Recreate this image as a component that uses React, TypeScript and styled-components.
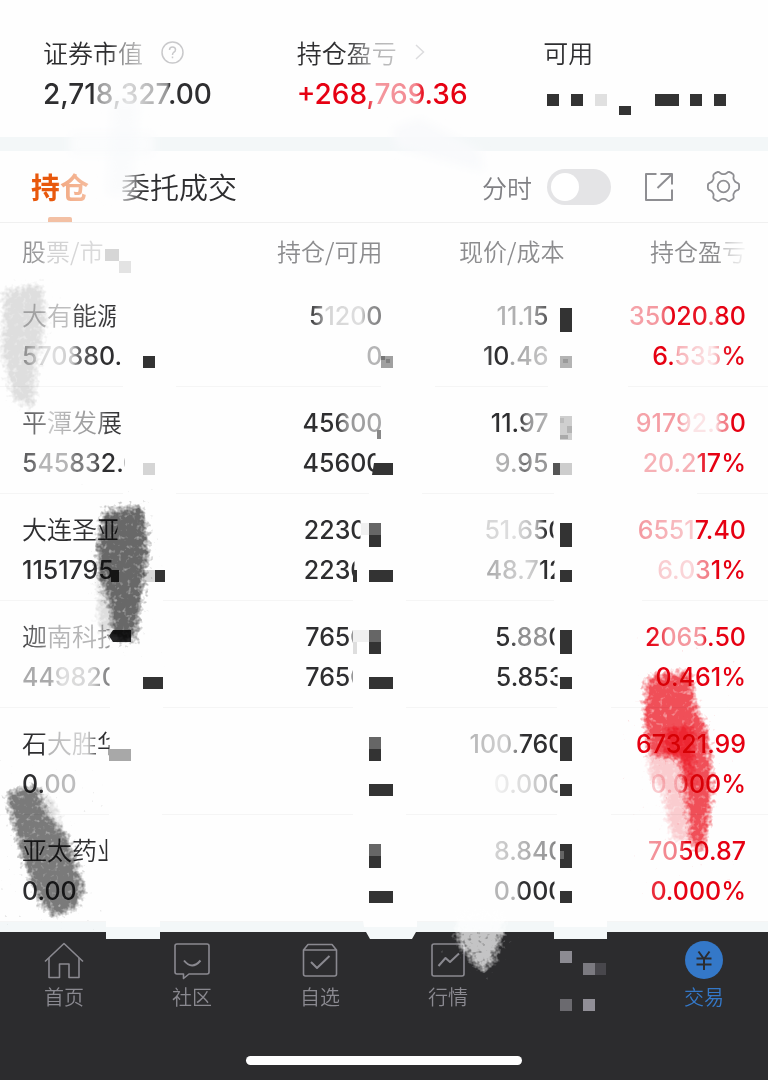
import React from "react";
import styled, { createGlobalStyle } from "styled-components";

type Stop = [number, number];

const cjk = `"Noto Sans CJK SC", sans-serif`;

const GlobalStyle = createGlobalStyle`
  * { box-sizing: border-box; }
  body {
    margin: 0;
    background: #fefefe;
    color: #2e2e30;
    font-family: Inter, ${cjk};
  }
  button { border: 0; padding: 0; background: none; font: inherit; color: inherit; cursor: pointer; }
`;

const Page = styled.div`
  position: relative;
  display: flex;
  flex-direction: column;
  min-height: 100vh;
  overflow: hidden;
`;

/* Text whose ink thins out along its width; stops are [offset px, opacity]. */
const Fade = styled.span<{ $stops?: Stop[] }>`
  display: inline-block;
  white-space: nowrap;
  ${({ $stops }) =>
    $stops &&
    `mask-image: linear-gradient(90deg, ${$stops
      .map(([x, a]) => `rgba(0,0,0,${a}) ${x}px`)
      .join(", ")});`}
`;

const Summary = styled.section`
  display: grid;
  grid-template-columns: 35% 34% 1fr;
  padding: 31px 0 22px 43px;
`;

const Stat = styled.div`
  display: flex;
  flex-direction: column;
`;

const StatLabel = styled.div`
  display: flex;
  align-items: center;
  gap: 18px;
  height: 42px;
  font: 350 25px/40px ${cjk};
`;

const StatValue = styled.div<{ $up?: boolean }>`
  height: 42px;
  font-size: 28px;
  font-weight: 500;
  line-height: 42px;
  color: ${({ $up }) => ($up ? "#e60012" : "#2e2e30")};
`;

const Band = styled.div<{ $h: number }>`
  height: ${({ $h }) => $h}px;
  background: #f3f7f8;
`;

const Toolbar = styled.div`
  display: flex;
  align-items: center;
  height: 72px;
  padding: 0 28px 0 31px;
  border-bottom: 1px solid #f0f0f0;
`;

const Tab = styled.button<{ $active?: boolean }>`
  position: relative;
  height: 71px;
  margin-right: 32px;
  font: ${({ $active }) => ($active ? 700 : 350)} 29px/71px ${cjk};
  color: ${({ $active }) => ($active ? "#e8580c" : "#2e2e30")};
  &::after {
    content: "";
    display: ${({ $active }) => ($active ? "block" : "none")};
    position: absolute;
    left: 17px;
    bottom: 0;
    width: 24px;
    height: 5px;
    border-radius: 2px 2px 0 0;
    background: #f3c0a4;
  }
`;

const SwitchLabel = styled.label`
  display: flex;
  align-items: center;
  gap: 15px;
  margin-left: auto;
  font: 350 25px/36px ${cjk};
  color: #808084;
`;

const Switch = styled.input`
  appearance: none;
  width: 64px;
  height: 36px;
  margin: 0;
  padding: 4px;
  border-radius: 18px;
  background: #e4e4e6;
  &::before {
    content: "";
    display: block;
    width: 28px;
    height: 28px;
    border-radius: 50%;
    background: #fff;
  }
`;

const IconButton = styled.button`
  display: flex;
  margin-left: 34px;
  color: #8e8e92;
`;

const Table = styled.table`
  width: 100%;
  table-layout: fixed;
  border-collapse: separate;
  border-spacing: 0;
`;

const Head = styled.th<{ $left?: boolean }>`
  height: 57px;
  padding: 0;
  font: 350 24px/55px ${cjk};
  vertical-align: top;
  color: #8c8c8e;
  text-align: ${({ $left }) => ($left ? "left" : "right")};
  &:first-child { padding-left: 22px; }
  &:last-child { padding-right: 22px; }
`;

const Cell = styled.td`
  height: 107px;
  padding: 16px 0 10px;
  border-bottom: 1px solid #f5f5f5;
  text-align: right;
  vertical-align: top;
  &:first-child { padding-left: 22px; text-align: left; }
  &:last-child { padding-right: 22px; color: #e60012; }
`;

const Line = styled.div<{ $name?: boolean; $inset?: boolean }>`
  height: 40px;
  padding-right: ${({ $inset }) => ($inset ? 16 : 0)}px;
  font: ${({ $name }) => ($name ? `350 25px/37px ${cjk}` : `500 25px/40px Inter, sans-serif`)};
`;

const Nav = styled.nav`
  flex: 1;
  display: flex;
  flex-direction: column;
  justify-content: space-between;
  align-items: center;
  gap: 40px;
  padding: 9px 0 15px;
  background: #2c2c2e;
`;

const NavList = styled.div`
  display: grid;
  grid-template-columns: repeat(6, 1fr);
  width: 100%;
`;

const NavItem = styled.a<{ $active?: boolean }>`
  display: flex;
  flex-direction: column;
  align-items: center;
  font: 350 20px/32px ${cjk};
  color: ${({ $active }) => ($active ? "#3478c8" : "#8a8990")};
  text-decoration: none;
`;

const HomeBar = styled.div`
  width: 36%;
  height: 9px;
  border-radius: 5px;
  background: #fff;
`;

const Layer = styled.svg<{ $multiply?: boolean }>`
  position: absolute;
  top: 0;
  left: 0;
  pointer-events: none;
  mix-blend-mode: ${({ $multiply }) => ($multiply ? "multiply" : "normal")};
`;

interface Entry {
  t: string;
  f?: Stop[];
  inset?: boolean;
}

const rows: Entry[][][] = [
  [
    [
      { t: "大有能源", f: [[0, 0.35], [48, 0.3], [50, 0.85], [75, 0.9], [93, 1], [94, 0]] },
      { t: "570880.", f: [[0, 0.5], [14, 0.2], [30, 0.15], [50, 0.25], [56, 0.7], [80, 1]] },
    ],
    [
      { t: "51200", f: [[0, 1], [12, 0.6], [16, 0.2], [52, 0.15], [58, 0.5], [73, 0.6]] },
      { t: "0", f: [[0, 0.35], [16, 0.35]] },
    ],
    [
      { t: "11.15", f: [[0, 0.35], [34, 0.4], [50, 0.8]], inset: true },
      { t: "10.46", f: [[0, 0.8], [12, 1], [24, 1], [28, 0.45], [65, 0.25]], inset: true },
    ],
    [
      { t: "35020.80", f: [[0, 0.35], [30, 0.4], [44, 1], [76, 0.9], [79, 0.6], [86, 0.6], [90, 1]] },
      { t: "6.535%", f: [[0, 1], [20, 1], [26, 0.3], [60, 0.08], [68, 0.4], [72, 0.9], [88, 1]] },
    ],
  ],
  [
    [
      { t: "平潭发展", f: [[0, 0.8], [24, 0.6], [27, 0.25], [50, 0.4], [75, 0.5], [85, 0.9], [98, 1]] },
      { t: "545832.0", f: [[0, 0.8], [12, 0.7], [16, 0.35], [45, 0.35], [55, 0.7], [66, 0.5], [80, 1], [102, 1], [103, 0]] },
    ],
    [
      { t: "45600", f: [[0, 1], [34, 1], [44, 0.5], [79, 0.4]] },
      { t: "45600", f: [[0, 1], [72, 1], [73, 0]] },
    ],
    [
      { t: "11.97", f: [[0, 1], [28, 1], [38, 0.5], [62, 0.3]], inset: true },
      { t: "9.95", f: [[0, 0.35], [20, 0.4], [30, 0.7], [36, 0.5], [55, 0.5]], inset: true },
    ],
    [
      { t: "91792.80", f: [[0, 0.35], [42, 0.4], [56, 0.1], [80, 0.1], [86, 0.5], [94, 0.5], [96, 1]] },
      { t: "20.217%", f: [[0, 0.3], [50, 0.3], [58, 0.8], [66, 1]] },
    ],
  ],
  [
    [
      { t: "大连圣亚", f: [[0, 1], [95, 1], [96, 0]] },
      { t: "1151795", f: [[0, 1], [90, 1], [91, 0]] },
    ],
    [
      { t: "2230", f: [[0, 1], [56, 1], [57, 0]], inset: true },
      { t: "2230", f: [[0, 1], [50, 1], [51, 0]], inset: true },
    ],
    [
      { t: "51.650", f: [[0, 0.2], [30, 0.15], [52, 0.35], [62, 1], [69, 1], [70, 0]] },
      { t: "48.712", f: [[0, 0.4], [40, 0.2], [52, 0.3], [56, 1], [68, 1], [69, 0]] },
    ],
    [
      { t: "65517.40", f: [[0, 0.4], [56, 0.2], [58, 1]] },
      { t: "6.031%", f: [[0, 0.2], [35, 0.15], [42, 0.45], [53, 0.5], [55, 1]] },
    ],
  ],
  [
    [
      { t: "迦南科技", f: [[0, 0.9], [24, 0.6], [28, 0.35], [75, 0.35], [87, 0.5], [88, 0]] },
      { t: "449820", f: [[0, 0.4], [28, 0.4], [40, 0.15], [70, 0.2], [80, 0.5], [87, 0.6], [88, 0]] },
    ],
    [
      { t: "7650", f: [[0, 1], [47, 1], [48, 0]], inset: true },
      { t: "7650", f: [[0, 1], [47, 1], [48, 0]], inset: true },
    ],
    [
      { t: "5.880", f: [[0, 1], [16, 1], [24, 0.55], [50, 0.5], [56, 1], [59, 1], [60, 0]] },
      { t: "5.853", f: [[0, 1], [61, 1], [62, 0]] },
    ],
    [
      { t: "2065.50", f: [[0, 1], [12, 0.9], [26, 0.4], [56, 0.4], [62, 1]] },
      { t: "0.461%" },
    ],
  ],
  [
    [
      { t: "石大胜华", f: [[0, 1], [22, 1], [26, 0.35], [65, 0.2], [74, 0.8], [76, 1], [87, 1], [88, 0]] },
      { t: "0.00", f: [[0, 1], [20, 1], [25, 0.35], [54, 0.3]] },
    ],
    [],
    [
      { t: "100.760", f: [[0, 0.35], [36, 0.2], [46, 0.6], [53, 1], [87, 1], [88, 0]] },
      { t: "0.000", f: [[0, 0.05], [36, 0.2], [60, 0.4], [63, 0.6], [64, 0]] },
    ],
    [{ t: "67321.99" }, { t: "0.000%", f: [[0, 0.2], [28, 0.2], [40, 1]] }],
  ],
  [
    [{ t: "亚太药业", f: [[0, 1], [85, 1], [86, 0]] }, { t: "0.00" }],
    [],
    [
      { t: "8.840", f: [[0, 0.2], [30, 0.35], [55, 0.5], [61, 0.6], [62, 0]] },
      { t: "0.000", f: [[0, 0.35], [22, 0.35], [27, 1], [60, 1], [61, 0]] },
    ],
    [
      { t: "7050.87", f: [[0, 0.4], [30, 0.5], [38, 1]] },
      { t: "0.000%", f: [[0, 0.8], [16, 0.9], [20, 1]] },
    ],
  ],
];

const polar = (deg: number, r: number) => {
  const a = (deg * Math.PI) / 180;
  return `${(16.5 + r * Math.cos(a)).toFixed(2)} ${(16.5 + r * Math.sin(a)).toFixed(2)}`;
};

const gearPath =
  `M${polar(-9, 15.6)}` +
  [0, 60, 120, 180, 240, 300]
    .map(
      (d) =>
        `Q${polar(d, 15.8)} ${polar(d + 9, 15.6)}` +
        `C${polar(d + 19, 14.8)} ${polar(d + 14, 12.4)} ${polar(d + 30, 12.4)}` +
        `C${polar(d + 46, 12.4)} ${polar(d + 41, 14.8)} ${polar(d + 51, 15.6)}`
    )
    .join("") +
  "Z";

const navIcons: Record<string, React.ReactNode> = {
  首页: (
    <>
      <path d="M1 20.5L20 2.5L39 20.5" />
      <path d="M5 17V36.5H15.5V23H25V36.5H35V17" />
    </>
  ),
  社区: (
    <>
      <path d="M5 3H35Q37 3 37 5V31Q37 33 35 33H17L11.500 37.500V33H5Q3 33 3 31V5Q3 3 5 3Z" />
      <path d="M12 19.500Q20 29.500 28.500 19.500" strokeWidth="2" />
    </>
  ),
  自选: (
    <>
      <path d="M3.500 9L8 3.500H32L36.500 9V33Q36.500 35 34.500 35H5.500Q3.500 35 3.500 33ZM3.500 9H36.500" />
      <path d="M11 21L17 27L29.500 15" strokeWidth="2" />
    </>
  ),
  行情: (
    <>
      <rect x="4" y="3" width="32" height="32" rx="2" />
      <path d="M10.500 25L17.500 17L22 21L31 12.500" strokeWidth="2" />
    </>
  ),
  交易: (
    <>
      <circle cx="20" cy="19" r="19" fill="#3478c8" stroke="none" />
      <path d="M14.500 10.500L20 18L25.500 10.500M20 18V29M12.500 17.500H27.500M12.500 23.500H27.500" stroke="#2c2c2e" strokeWidth="2" />
    </>
  ),
};

/* Mosaic squares: x, y, width, height, fill */
const tiles: [number, number, number, number, string][] = [
  [105, 249, 14, 12, "#d6d6d6"],
  [119, 261, 12, 12, "#e3e3e3"],
  [143, 356, 12, 12, "#333"],
  [381, 356, 12, 12, "#a0a0a0"],
  [381, 356, 4, 4, "#777"],
  [386, 359, 4, 4, "#808080"],
  [143, 463, 12, 12, "#d5d5d5"],
  [377, 430, 4, 9, "#888"],
  [560, 308, 12, 24, "#333"],
  [560, 356, 12, 12, "#b4b4b4"],
  [563, 359, 5, 4, "#9a9a9a"],
  [560, 416, 12, 24, "#cfcfcf"],
  [560, 418, 4, 5, "#bcbcbc"],
  [567, 426, 5, 7, "#b4b4b4"],
  [560, 435, 8, 4, "#aaa"],
  [553, 463, 7, 12, "#555"],
  [560, 463, 12, 12, "#cdcdcd"],
  [111, 570, 8, 12, "#333"],
  [143, 570, 12, 12, "#d8d8d8"],
  [155, 570, 10, 12, "#333"],
  [361, 523, 8, 12, "#f0f0f0"],
  [353, 570, 4, 12, "#333"],
  [353, 630, 16, 12, "#f0f0f0"],
  [353, 642, 4, 12, "#dedede"],
  [143, 677, 20, 12, "#333"],
  [109, 749, 22, 12, "#a8a8a8"],
  ...[523, 630, 737, 844].flatMap((y): [number, number, number, number, string][] => [
    [369, y, 12, 12, "#666"],
    [369, y + 12, 12, 12, "#333"],
    [560, y, 12, 24, "#333"],
    [369, y + 47, 24, 12, "#333"],
    [560, y + 47, 12, 12, "#333"],
  ]),
  [560, 851, 4, 8, "#666"],
];

/* Breaks in the row dividers: x, y, width */
const gaps: [number, number, number][] = [
  [123, 386, 53], [381, 386, 54], [548, 386, 80],
  [123, 493, 53], [369, 493, 53], [554, 493, 143],
  [110, 600, 53], [353, 600, 53], [554, 600, 88],
  [110, 707, 53], [353, 707, 53], [557, 707, 54],
  [109, 814, 53], [353, 814, 53], [557, 814, 54],
];

const Grain = ({ id, color, seed }: { id: string; color: string; seed: number }) => (
  <filter id={id} x="-30%" y="-20%" width="160%" height="140%" colorInterpolationFilters="sRGB">
    <feGaussianBlur in="SourceAlpha" stdDeviation="5" result="soft" />
    <feTurbulence type="fractalNoise" baseFrequency="0.22" numOctaves={2} seed={seed} />
    <feColorMatrix values="0 0 0 0 0  0 0 0 0 0  0 0 0 0 0  1 0 0 0 0" result="noise" />
    <feComposite in="soft" in2="noise" operator="arithmetic" k2={1.6} k3={1.6} k4={-1.25} result="shape" />
    <feFlood floodColor={color} />
    <feComposite in2="shape" operator="in" result="grain" />
    <feGaussianBlur in="grain" stdDeviation="0.5" />
  </filter>
);

const BrushMarks = () => (
  <Layer $multiply width="768" height="932" aria-hidden="true">
    <defs>
      <Grain id="pale" color="#dfdfdf" seed={2} />
      <Grain id="dark" color="#686868" seed={5} />
      <Grain id="mid" color="#7a7a7a" seed={8} />
      <Grain id="red" color="#f14f58" seed={4} />
      <Grain id="pink" color="#fbcdd0" seed={9} />
      <Grain id="deep" color="#ee2732" seed={3} />
    </defs>
    <path filter="url(#pale)" d="M3 290L42 282L47 320L38 360L34 410L12 400L1 350Z" />
    <path filter="url(#pale)" d="M96 570L112 585L120 642L98 630Z" />
    <path filter="url(#dark)" d="M103 510L144 505L149 550L142 600L136 642L113 640L108 600L97 575L97 540Z" />
    <path filter="url(#pale)" d="M38 788L54 800L68 845L50 840Z" />
    <path filter="url(#mid)" d="M5 792L38 784L48 814L68 836L85 888L78 908L54 918L40 904L22 860L12 822Z" />
    <path filter="url(#pink)" d="M648 745L690 750L692 800L690 846L670 838L662 790L648 776Z" />
    <path filter="url(#red)" d="M646 676L690 670L698 710L708 728L714 780L709 825L702 856L690 846L685 800L680 760L648 756L643 716Z" />
    <path filter="url(#deep)" d="M664 728L694 724L694 790L688 790L682 760L662 752Z" />
  </Layer>
);

const Overlay = () => (
  <Layer width="768" height="1020" aria-hidden="true">
    <defs>
      <Grain id="chalk" color="#ffffff" seed={6} />
      <filter id="haze" x="-30%" y="-30%" width="160%" height="160%">
        <feGaussianBlur stdDeviation="5" />
      </filter>
    </defs>
    <path filter="url(#haze)" fill="#fbfcfd" d="M70 132H154V156H70Z" />
    <path filter="url(#haze)" fill="#f7fafc" fillOpacity="0.5" d="M112 100H140L132 196H106Z" />
    <path filter="url(#haze)" fill="#f8fafc" fillOpacity="0.9" d="M392 128L420 118L480 150L484 172L396 148Z" />
    {gaps.map(([x, y, w]) => (
      <rect key={`${x}-${y}`} x={x} y={y} width={w} height="2" fill="#fefefe" />
    ))}
    {tiles.map(([x, y, w, h, fill], i) => (
      <rect key={i} x={x} y={y} width={w} height={h} fill={fill} />
    ))}
    <path fill="#262627" d="M113 630H131V642H113L109 636Z" />
    <path fill="#333" d="M374 463H393V475H372Z" />
    <path fill="#f4f8f9" d="M106 921H160V939H106ZM554 921H607V939H554ZM363 921H417L416 932L412 939H370L366 932Z" />
    <path fill="#fefefe" d="M106 920H160V927H106ZM554 920H607V927H554ZM363 920H417V927H364Z" />
    <path filter="url(#chalk)" opacity="0.72" d="M456 912L507 912L503 938L494 962L484 974L470 960L456 940Z" />
  </Layer>
);

const headers: Entry[] = [
  { t: "股票/市", f: [[0, 1], [20, 0.8], [24, 0.4], [80, 0.3]] },
  { t: "持仓/可用" },
  { t: "现价/成本" },
  { t: "持仓盈亏", f: [[0, 1], [68, 1], [74, 0.5], [94, 0.1]] },
];

export default function App() {
  return (
    <Page>
      <GlobalStyle />
      <Summary>
        <Stat>
          <StatLabel>
            <Fade $stops={[[0, 1], [66, 1], [76, 0.6], [100, 0.25]]}>证券市值</Fade>
            <svg width="23" height="23" viewBox="0 0 23 23" fill="none" stroke="#c9c9cb" strokeWidth="1.500">
              <circle cx="11.500" cy="11.500" r="10.500" />
              <path d="M8.500 9Q8.500 6 11.500 6Q14.500 6 14.500 8.800Q14.500 10.500 12.500 11.500Q11.500 12.200 11.500 14M11.500 15.500V17.200" />
            </svg>
          </StatLabel>
          <StatValue>
            <Fade $stops={[[0, 1], [50, 1], [54, 0.5], [70, 0.35], [84, 0.18], [110, 0.35], [124, 0.5], [127, 1]]}>
              2,718,327.00
            </Fade>
          </StatValue>
        </Stat>
        <Stat>
          <StatLabel>
            <Fade $stops={[[0, 1], [50, 1], [72, 0.5], [78, 0.35], [100, 0.3]]}>持仓盈亏</Fade>
            <svg width="10" height="16" viewBox="0 0 10 16" fill="none" stroke="#dcdcde" strokeWidth="1.500">
              <path d="M1 1L8.500 8L1 15" />
            </svg>
          </StatLabel>
          <StatValue $up>
            <Fade $stops={[[0, 1], [70, 1], [77, 0.4], [118, 0.45], [127, 1]]}>+268,769.36</Fade>
          </StatValue>
        </Stat>
        <Stat>
          <StatLabel>可用</StatLabel>
          <StatValue>
            <svg width="186" height="42" fill="#333" aria-hidden="true">
              <path d="M4 21h12v12h-12zM28 21h12v12h-12zM76 33h12v9h-12zM112 21h24v12h-24zM147 21h12v12h-12zM171 21h12v12h-12z" />
              <path d="M52 21h12v12h-12z" fill="#e0e0e0" />
            </svg>
          </StatValue>
        </Stat>
      </Summary>
      <Band $h={14} />
      <Toolbar>
        <Tab $active>
          <Fade $stops={[[0, 1], [26, 1], [30, 0.5], [56, 0.4]]}>持仓</Fade>
        </Tab>
        <Tab>
          <Fade $stops={[[0, 0.4], [12, 0.7], [24, 1]]}>委托成交</Fade>
        </Tab>
        <SwitchLabel>
          分时
          <Switch type="checkbox" />
        </SwitchLabel>
        <IconButton aria-label="分享">
          <svg width="28" height="28" viewBox="0 0 28 28" fill="none" stroke="currentColor" strokeWidth="2" strokeLinejoin="round">
            <path d="M11.500 1H1V27H27V16.500M15.500 1H27V11.500M12.500 15L26.500 1.500" />
          </svg>
        </IconButton>
        <IconButton aria-label="设置">
          <svg width="33" height="33" viewBox="0 0 33 33" fill="none" stroke="currentColor" strokeWidth="1.800">
            <path d={gearPath} />
            <circle cx="16.500" cy="16.500" r="5.800" />
          </svg>
        </IconButton>
      </Toolbar>
      <Table>
        <colgroup>
          <col />
          <col style={{ width: "23.7%" }} />
          <col style={{ width: "23.7%" }} />
          <col style={{ width: "26.5%" }} />
        </colgroup>
        <thead>
          <tr>
            {headers.map((h, i) => (
              <Head key={i} $left={i === 0} scope="col">
                <Fade $stops={h.f}>{h.t}</Fade>
              </Head>
            ))}
          </tr>
        </thead>
        <tbody>
          {rows.map((cells, r) => (
            <tr key={r}>
              {cells.map((lines, c) => (
                <Cell key={c}>
                  {lines.map((l, i) => (
                    <Line key={i} $name={c === 0 && i === 0} $inset={l.inset}>
                      <Fade $stops={l.f}>{l.t}</Fade>
                    </Line>
                  ))}
                </Cell>
              ))}
            </tr>
          ))}
        </tbody>
      </Table>
      <Band $h={10} />
      <Nav>
        <NavList>
          {["首页", "社区", "自选", "行情", "", "交易"].map((name) =>
            name ? (
              <NavItem key={name} href="#" $active={name === "交易"}>
                <svg width="40" height="40" viewBox="0 0 40 40" fill="none" stroke="currentColor" strokeWidth="1.600" strokeLinejoin="round">
                  {navIcons[name]}
                </svg>
                {name}
              </NavItem>
            ) : (
              <NavItem key="mosaic" href="#">
                <svg width="60" height="72" aria-hidden="true">
                  <path fill="#8c8b92" d="M14 10h12v12h-12z" />
                  <path fill="#7b7a80" d="M37 22h12v12h-12z" />
                  <path fill="#48474c" d="M49 22h11v12h-11z" />
                  <path fill="#6b6a6f" d="M14 58h12v12h-12z" />
                  <path fill="#918f97" d="M37 58h12v12h-12z" />
                </svg>
              </NavItem>
            )
          )}
        </NavList>
        <HomeBar />
      </Nav>
      <Overlay />
      <BrushMarks />
    </Page>
  );
}
